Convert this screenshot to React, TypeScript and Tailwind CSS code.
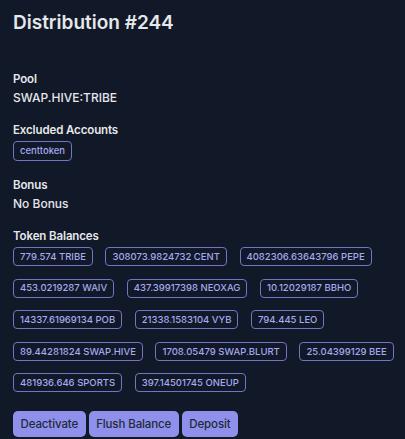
import React from "react";

const tokens = [
  "779.574 TRIBE",
  "308073.9824732 CENT",
  "4082306.63643796 PEPE",
  "453.0219287 WAIV",
  "437.39917398 NEOXAG",
  "10.12029187 BBHO",
  "14337.61969134 POB",
  "21338.1583104 VYB",
  "794.445 LEO",
  "89.44281824 SWAP.HIVE",
  "1708.05479 SWAP.BLURT",
  "25.04399129 BEE",
  "481936.646 SPORTS",
  "397.14501745 ONEUP",
];

function Badge({ children, tall }: { children: React.ReactNode; tall?: boolean }) {
  return (
    <span
      className={
        (tall ? "h-[20px] " : "h-[19px] ") +
        "inline-flex items-center rounded-[4px] border border-[#7274c6] px-[6px] text-[9.5px] font-medium leading-none text-[#a7a8ef]"
      }
    >
      {children}
    </span>
  );
}

function Label({ children }: { children: React.ReactNode }) {
  return (
    <div className="text-[11.5px] font-semibold leading-[18px] tracking-[-0.01em]">{children}</div>
  );
}

export default function App() {
  return (
    <div
      className="min-h-[439px] w-full bg-[#111827] pl-[13px] pr-[8px] pt-[9px] pb-2 text-[#e5e7eb]"
      style={{ fontFamily: "Inter, 'Noto Sans', sans-serif" }}
    >
      <h1 className="text-[19px] font-semibold leading-7">Distribution #244</h1>

      <div className="mt-[33px]">
        <Label>Pool</Label>
        <div className="mt-[1px] text-[12px] font-medium leading-[18px]">SWAP.HIVE:TRIBE</div>
      </div>

      <div className="mt-[14px]">
        <Label>Excluded Accounts</Label>
        <div className="mt-[2px] flex">
          <Badge tall>centtoken</Badge>
        </div>
      </div>

      <div className="mt-[15px]">
        <Label>Bonus</Label>
        <div className="mt-[1px] text-[12px] font-medium leading-[18px]">No Bonus</div>
      </div>

      <div className="mt-[14px]">
        <Label>Token Balances</Label>
        <div className="mt-[2px] flex flex-wrap gap-x-[12.6px] gap-y-[12.6px]">
          {tokens.map((t) => (
            <Badge key={t}>{t}</Badge>
          ))}
        </div>
      </div>

      <div className="mt-[19px] flex gap-[3px]">
        {["Deactivate", "Flush Balance", "Deposit"].map((b) => (
          <button
            key={b}
            className="h-[26px] rounded-[5px] bg-[#8f90eb] px-[7.5px] text-[11.5px] font-medium tracking-[-0.01em] text-[#1f2937]"
          >
            {b}
          </button>
        ))}
      </div>
    </div>
  );
}
